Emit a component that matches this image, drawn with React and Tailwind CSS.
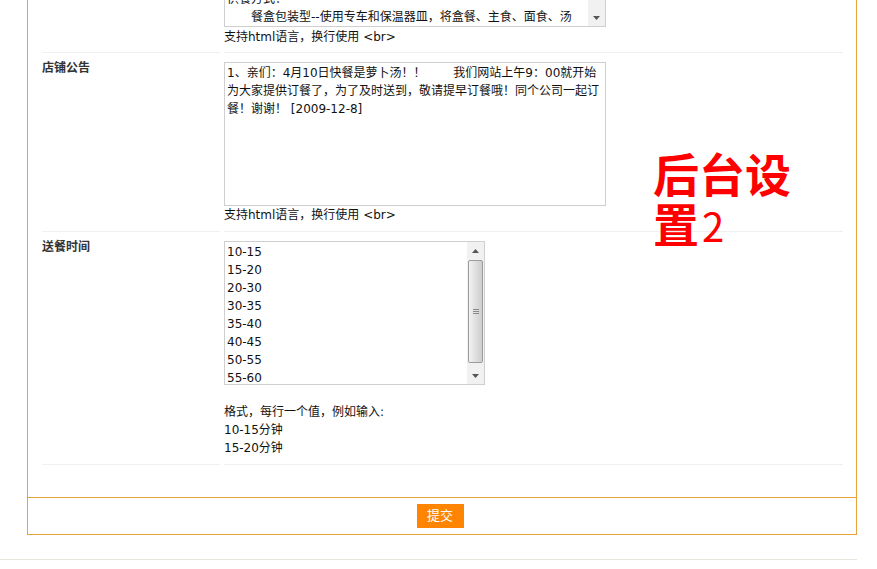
import React from 'react';

const Arrow = ({ up }) => (
    <svg width="7" height="4" viewBox="0 0 7 4" className="block">
        <path d={up ? 'M3.5 0L7 4H0z' : 'M0 0h7L3.5 4z'} fill="#555" />
    </svg>
);

const Thumb = ({ height }) => (
    <div
        className="mx-auto flex w-[15px] items-center justify-center rounded-[2px] border border-[#9c9c9c] bg-gradient-to-r from-[#f2f2f2] to-[#cdcdcd]"
        style={{ height }}
    >
        <div className="flex flex-col gap-[1px]">
            <div className="h-px w-[6px] bg-[#8a8a8a]" />
            <div className="h-px w-[6px] bg-[#8a8a8a]" />
            <div className="h-px w-[6px] bg-[#8a8a8a]" />
        </div>
    </div>
);

const HtmlHint = () => <div className="mt-[1px] leading-[18px]">支持html语言，换行使用 {'<br>'}</div>;

const deliveryTimes = ['10-15', '15-20', '20-30', '30-35', '35-40', '40-45', '50-55', '55-60'];

const App = () => {
    return (
        <div className="relative h-[569px] w-[877px] overflow-hidden bg-white text-[12px] text-[#111] font-['DejaVu_Sans','Noto_Sans_CJK_SC',sans-serif]">
            {/* main form panel */}
            <div className="ml-[27px] w-[830px] border-x border-b border-[#e8a23c]">
                <div className="w-[815px] pb-[32px] pl-[14px]">
                    {/* row 1 : cut off at the top */}
                    <div className="grid grid-cols-[178px_1fr] gap-x-[4px]">
                        <div className="border-b border-[#f0f0f0]" />
                        <div className="border-b border-[#f0f0f0] pb-[6px]">
                            <div className="flex h-[27px] w-[382px] border-x border-b border-[#cfcfcf]">
                                <div className="flex flex-1 flex-col justify-end overflow-hidden pl-[2px] leading-[18px]">
                                    <div className="whitespace-nowrap">供餐方式：</div>
                                    <div className="whitespace-nowrap">　　餐盒包装型--使用专车和保温器皿，将盒餐、主食、面食、汤</div>
                                </div>
                                <div className="flex w-[17px] flex-col justify-end bg-[#f1f1f1]">
                                    <div className="flex h-[17px] items-center justify-center">
                                        <Arrow />
                                    </div>
                                </div>
                            </div>
                            <HtmlHint />
                        </div>
                    </div>

                    {/* row 2 : 店铺公告 */}
                    <div className="grid grid-cols-[178px_1fr] gap-x-[4px]">
                        <div className="border-b border-[#f0f0f0] pt-[6px] font-bold leading-[18px] text-[#333]">店铺公告</div>
                        <div className="border-b border-[#f0f0f0] pt-[9px] pb-[7px]">
                            <div className="h-[144px] w-[382px] border border-[#cfcfcf] px-[2px] py-[1px] leading-[18px]">
                                <div className="whitespace-nowrap">1、亲们：4月10日快餐是萝卜汤！！　　 我们网站上午9：00就开始</div>
                                <div className="whitespace-nowrap">为大家提供订餐了，为了及时送到，敬请提早订餐哦！同个公司一起订</div>
                                <div className="whitespace-nowrap">餐！谢谢！ [2009-12-8]</div>
                            </div>
                            <div className="leading-[18px]">支持html语言，换行使用 {'<br>'}</div>
                        </div>
                    </div>

                    {/* row 3 : 送餐时间 */}
                    <div className="grid grid-cols-[178px_1fr] gap-x-[4px]">
                        <div className="border-b border-[#f0f0f0] pt-[6px] font-bold leading-[18px] text-[#333]">送餐时间</div>
                        <div className="border-b border-[#f0f0f0] pt-[9px] pb-[7px]">
                            <div className="flex h-[144px] w-[261px] border border-[#cfcfcf]">
                                <div className="flex-1 overflow-hidden px-[2px] py-[1px] leading-[18px]">
                                    {deliveryTimes.map((t) => (
                                        <div key={t}>{t}</div>
                                    ))}
                                </div>
                                <div className="flex w-[17px] flex-col bg-[#f1f1f1]">
                                    <div className="flex h-[17px] items-center justify-center">
                                        <Arrow up />
                                    </div>
                                    <div className="mt-[1px]">
                                        <Thumb height={103} />
                                    </div>
                                    <div className="flex-1" />
                                    <div className="flex h-[17px] items-center justify-center">
                                        <Arrow />
                                    </div>
                                </div>
                            </div>
                            <div className="mt-[18px] leading-[18px]">
                                <div>格式，每行一个值，例如输入:</div>
                                <div>10-15分钟</div>
                                <div>15-20分钟</div>
                            </div>
                        </div>
                    </div>
                </div>
            </div>

            {/* submit bar */}
            <div className="ml-[27px] flex w-[830px] justify-center border-x border-b border-[#e8a23c] py-[6px]">
                <button className="mr-[4px] h-[24px] w-[47px] bg-[#ff8400] text-[13px] text-white">提交</button>
            </div>

            <div className="mt-[24px] h-px w-[857px] bg-[#e6e6dc]" />

            {/* annotation */}
            <div className="absolute left-[653px] top-[147px] w-[150px] text-[46px] font-bold leading-[50px] text-[#ff0000] font-['Noto_Sans_CJK_SC',sans-serif]">
                后台设置<span className="ml-[3px] text-[40px] font-normal">2</span>
            </div>
        </div>
    );
};

export default App;
